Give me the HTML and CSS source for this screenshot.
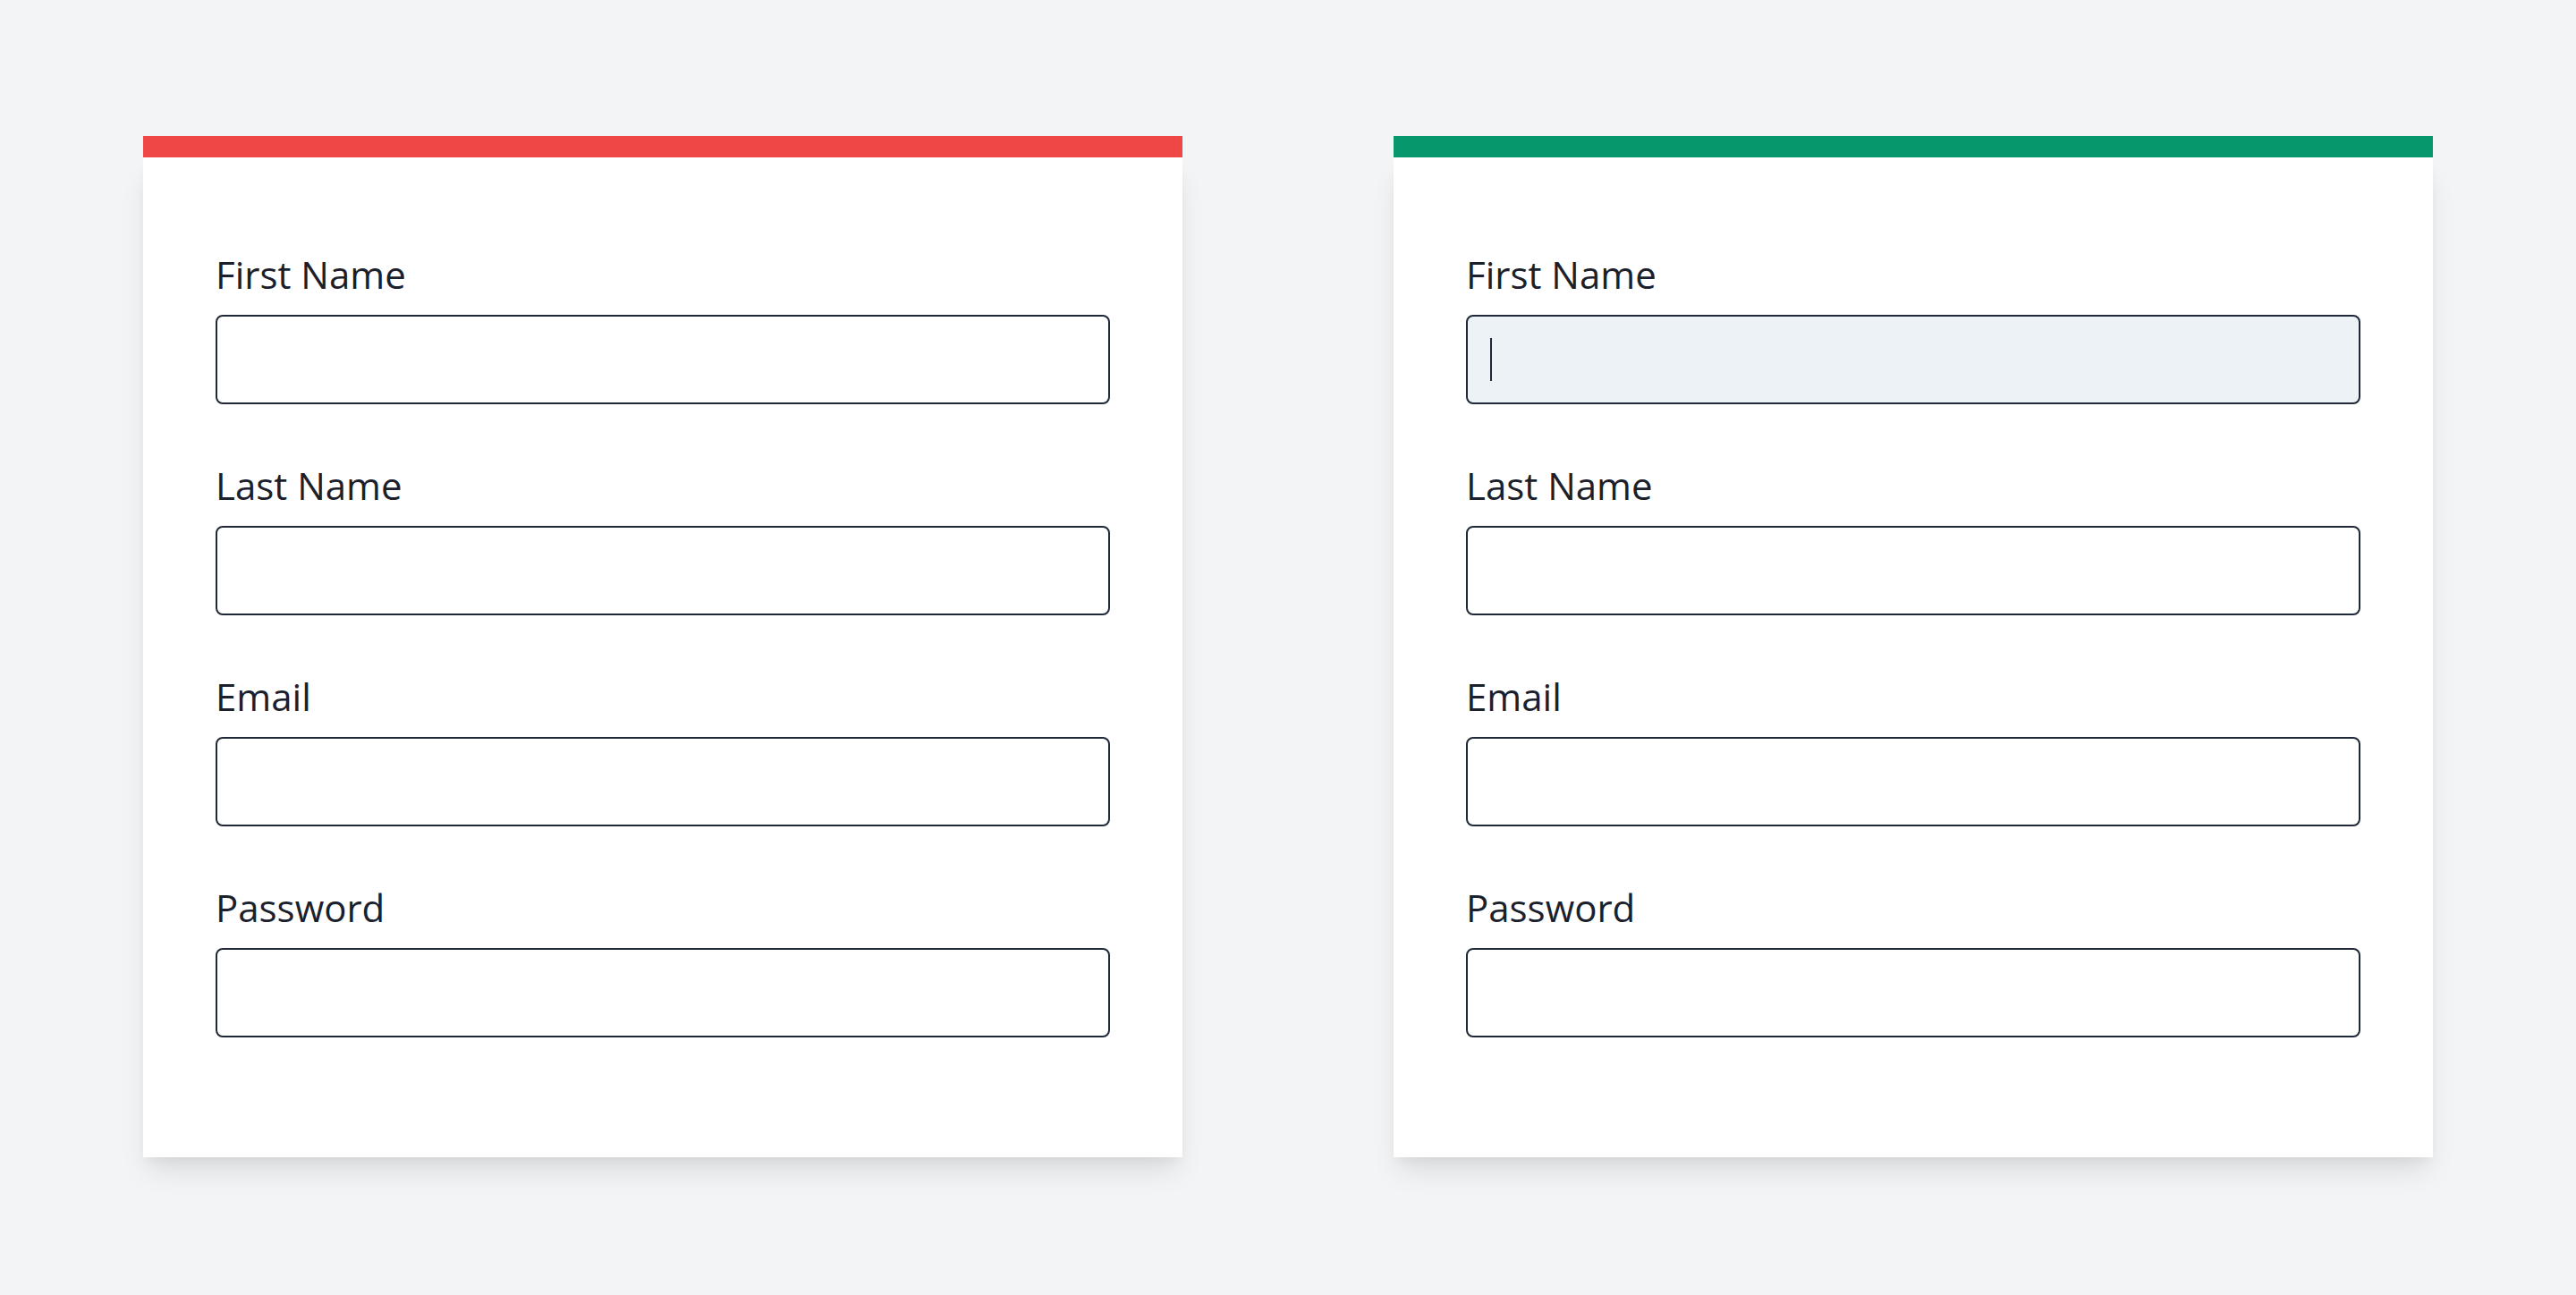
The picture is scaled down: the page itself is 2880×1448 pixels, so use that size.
FILE: index.html
```html
<!DOCTYPE html>
<html lang="en">
<head>
<meta charset="utf-8">
<title>Form states</title>
<link rel="stylesheet" href="styles.css">
</head>
<body>
<main class="page">
  <section class="card card-error">
    <div class="card-stripe"></div>
    <form class="card-body">
      <div class="field">
        <label class="field-label" for="a-first">First Name</label>
        <input class="field-input" id="a-first" type="text">
      </div>
      <div class="field">
        <label class="field-label" for="a-last">Last Name</label>
        <input class="field-input" id="a-last" type="text">
      </div>
      <div class="field">
        <label class="field-label" for="a-email">Email</label>
        <input class="field-input" id="a-email" type="email">
      </div>
      <div class="field">
        <label class="field-label" for="a-pass">Password</label>
        <input class="field-input" id="a-pass" type="password">
      </div>
    </form>
  </section>
  <section class="card card-success">
    <div class="card-stripe"></div>
    <form class="card-body">
      <div class="field">
        <label class="field-label" for="b-first">First Name</label>
        <div class="input-wrap">
          <input class="field-input is-focused" id="b-first" type="text">
          <span class="caret"></span>
        </div>
      </div>
      <div class="field">
        <label class="field-label" for="b-last">Last Name</label>
        <input class="field-input" id="b-last" type="text">
      </div>
      <div class="field">
        <label class="field-label" for="b-email">Email</label>
        <input class="field-input" id="b-email" type="email">
      </div>
      <div class="field">
        <label class="field-label" for="b-pass">Password</label>
        <input class="field-input" id="b-pass" type="password">
      </div>
    </form>
  </section>
</main>
</body>
</html>
```

FILE: styles.css
```css
html, body {
  margin: 0;
  padding: 0;
  background: #f3f4f6;
}

body {
  font-family: "Open Sans", "Noto Sans", sans-serif;
  color: #1a202c;
}

.page {
  display: flex;
  justify-content: center;
  gap: 236px;
  padding-top: 152px;
  min-height: 1448px;
  box-sizing: border-box;
}

.card {
  width: 1162px;
  display: flex;
  flex-direction: column;
  align-self: flex-start;
}

.card-stripe {
  height: 24px;
}

.card-error .card-stripe {
  background: #ef4646;
}

.card-success .card-stripe {
  background: #07976c;
}

.card-body {
  background: #ffffff;
  padding: 102px 81px 134px;
  margin: 0;
  display: flex;
  flex-direction: column;
  gap: 62px;
  box-shadow: 0 20px 30px -6px rgba(0, 0, 0, 0.10), 0 8px 12px -4px rgba(0, 0, 0, 0.05);
}

.field {
  display: flex;
  flex-direction: column;
}

.field-label {
  font-size: 42px;
  line-height: 58px;
  margin-bottom: 16px;
  color: #1a202c;
}

.input-wrap {
  position: relative;
  display: flex;
}

.field-input {
  display: block;
  width: 1000px;
  height: 100px;
  box-sizing: border-box;
  border: 2px solid #1f2937;
  border-radius: 8px;
  background: #ffffff;
  padding: 0 24px;
  margin: 0;
  font: inherit;
  font-size: 40px;
  color: #1a202c;
  outline: none;
  caret-color: transparent;
}

.field-input.is-focused {
  background: #edf2f7;
}

.caret {
  position: absolute;
  left: 27px;
  top: 26px;
  width: 2px;
  height: 48px;
  background: #1f2937;
}
```
